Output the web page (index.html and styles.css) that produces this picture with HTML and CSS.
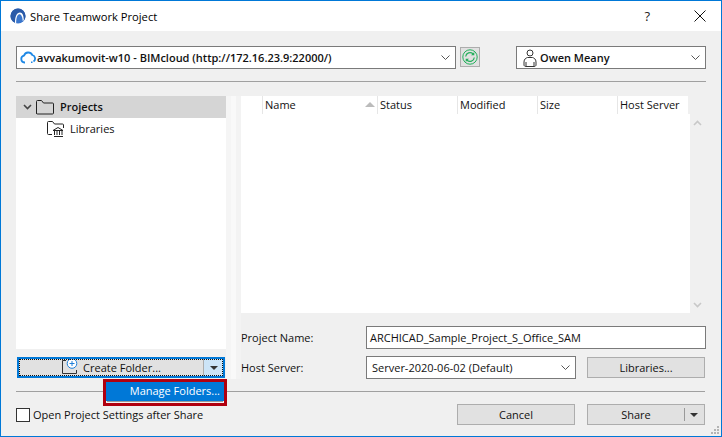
FILE: index.html
```html
<!DOCTYPE html>
<html lang="en">
<head>
<meta charset="utf-8">
<title>Share Teamwork Project</title>
<link rel="stylesheet" href="styles.css">
</head>
<body>
<div class="window">
  <header class="titlebar">
    <svg class="app-logo" width="16" height="16" viewBox="0 0 16 16"><circle cx="8" cy="8" r="7.500" fill="#3a76cc"/><path d="M8 .5a7.500 7.500 0 0 1 7.500 7.500c0 2-.8 3.800-2 5.200C13 9 11.500 6 9 6S5 9.500 4.800 14.800C2.300 13.500.5 11 .5 8A7.500 7.500 0 0 1 8 .5z" fill="#2a5aa8"/><path d="M5 15C5 8.500 6.800 4.500 10 4.500c2.500 0 3.700 3 3.800 7.500l-1 1.200C12.500 9 11.300 6.300 9.300 6.300 7.300 6.300 6.200 10 6.200 15.300z" fill="#fff"/></svg>
    <span class="title">Share Teamwork Project</span>
    <span class="help">?</span>
    <svg class="close" width="12" height="12" viewBox="0 0 12 12"><path d="M.5.5l11 11M11.500.5l-11 11" stroke="#111" stroke-width="1" fill="none"/></svg>
  </header>
  <main class="content">
    <div class="toprow">
      <div class="combo combo-server">
        <svg class="ico" width="16" height="13" viewBox="0 0 16 13"><path d="M5 11.500H4.500a3.500 3.500 0 0 1-.5-6.900A4.500 4.500 0 0 1 12.300 4a3.700 3.700 0 0 1 1.200 6.600" fill="none" stroke="#1e88e5" stroke-width="1.800"/><path d="M11 10.500h1.500v1.500H11z" fill="#1e88e5"/></svg>
        <b class="combo-text">avvakumovit-w10 - BIMcloud (http://172.16.23.9:22000/)</b>
        <svg class="chev" width="9" height="5" viewBox="0 0 9 5"><path d="M.5.5l4 4 4-4" fill="none" stroke="#555"/></svg>
      </div>
      <div class="refresh">
        <svg width="16" height="16" viewBox="0 0 16 16" fill="none" stroke="#23b05c"><circle cx="8" cy="8" r="7.200"/><path d="M3.700 7.500a4.300 4.300 0 0 1 7.300-2.700M12.300 8.500a4.300 4.300 0 0 1-7.300 2.700" stroke-width="1.200"/><path d="M9 6.300h3.300V3zM7 9.700H3.700V13z" fill="#23b05c" stroke="none"/></svg>
      </div>
      <div class="combo combo-user">
        <svg class="ico-user" width="14" height="18" viewBox="0 0 14 18" fill="none" stroke="#333"><circle cx="7" cy="4" r="3"/><path d="M3 17.500h8c1 0 2-.5 2-1.500v-3c0-3-2-4-3.500-4.500h-5C3 9 1 10 1 13v3c0 1 1 1.500 2 1.500zM3 13v4.500M11 13v4.500"/></svg>
        <b class="combo-text">Owen Meany</b>
        <svg class="chev" width="9" height="5" viewBox="0 0 9 5"><path d="M.5.5l4 4 4-4" fill="none" stroke="#555"/></svg>
      </div>
    </div>
    <hr class="sep sep-top">
    <div class="columns">
      <section class="left">
        <div class="tree">
          <div class="tree-row selected">
            <svg class="twist" width="9" height="6" viewBox="0 0 9 6"><path d="M1 1l3.500 3.500L8 1" fill="none" stroke="#444" stroke-width="1.600"/></svg>
            <svg width="18" height="15" viewBox="0 0 18 15"><path d="M.5 13.500V1.500a1 1 0 0 1 1-1h4l2 2.500h9a1 1 0 0 1 1 1v9a1 1 0 0 1-1 1h-15a1 1 0 0 1-1-1z" fill="none" stroke="#222"/></svg>
            <b>Projects</b>
          </div>
          <div class="tree-row sub">
            <svg width="18" height="16" viewBox="0 0 18 16" fill="none" stroke="#222"><path d="M5 13.500H1.500a1 1 0 0 1-1-1v-11a1 1 0 0 1 1-1h4l2 2.500h8a1 1 0 0 1 1 1v3"/><path d="M6 9.500h10l-5-3zM7 15.500h9M7.500 10v4M10 10v4M12.500 10v4M15 10v4"/></svg>
            <span>Libraries</span>
          </div>
        </div>
        <div class="split split-focus">
          <div class="split-main">
            <svg class="ico-new" width="16" height="16" viewBox="0 0 16 16" fill="none"><path d="M.5 2.500v13h14V12M.5 2.500H4" stroke="#333"/><circle cx="10" cy="5.500" r="4.800" fill="#fff" stroke="#1e7fd8"/><path d="M10 3v5M7.500 5.500h5" stroke="#1e7fd8"/></svg>
            <span>Create Folder...</span>
          </div>
          <div class="split-arrow"><i class="tri"></i></div>
        </div>
        <div class="menu"><div class="menu-item">Manage Folders...</div></div>
      </section>
      <div class="splitter"></div>
      <section class="right">
        <div class="table-wrap">
          <div class="table">
            <div class="thead">
              <div class="th th-blank"></div>
              <div class="th th-name"><span>Name</span><i class="sort"></i></div>
              <div class="th th-status">Status</div>
              <div class="th th-mod">Modified</div>
              <div class="th th-size">Size</div>
              <div class="th th-host">Host Server</div>
            </div>
          </div>
          <div class="scrollbar">
            <svg width="9" height="6" viewBox="0 0 9 6"><path d="M1 5l3.500-3.500L8 5" fill="none" stroke="#c8c8c8" stroke-width="1.600"/></svg>
            <svg width="9" height="6" viewBox="0 0 9 6"><path d="M1 1l3.500 3.500L8 1" fill="none" stroke="#c8c8c8" stroke-width="1.600"/></svg>
          </div>
        </div>
        <div class="form-row row-name">
          <label class="label">Project Name:</label>
          <div class="input">ARCHICAD_Sample_Project_S_Office_SAM</div>
        </div>
        <div class="form-row row-host">
          <label class="label">Host Server:</label>
          <div class="combo combo-host">
            <span class="combo-text">Server-2020-06-02 (Default)</span>
            <svg class="chev" width="9" height="5" viewBox="0 0 9 5"><path d="M.5.5l4 4 4-4" fill="none" stroke="#555"/></svg>
          </div>
          <div class="btn btn-lib">Libraries...</div>
        </div>
      </section>
    </div>
    <hr class="sep sep-bottom">
    <div class="footer">
      <div class="check"><i class="box"></i><span>Open Project Settings after Share</span></div>
      <div class="btn btn-cancel">Cancel</div>
      <div class="split split-share">
        <div class="split-main">Share</div>
        <div class="split-arrow"><i class="tri"></i></div>
      </div>
    </div>
  </main>
  <svg class="grip" width="10" height="10" viewBox="0 0 10 10" fill="#b4b4b4"><path d="M7 1h2v2H7zM4 4h2v2H4zM7 4h2v2H7zM1 7h2v2H1zM4 7h2v2H4zM7 7h2v2H7z"/></svg>
</div>
</body>
</html>
```

FILE: styles.css
```css
* { box-sizing: border-box; }
html, body { margin: 0; padding: 0; }
body {
  width: 722px;
  height: 437px;
  overflow: hidden;
  font-family: "Open Sans", "Noto Sans", "Liberation Sans", sans-serif;
  font-size: 11px;
  color: #111;
}
b { font-weight: 600; }
.window {
  position: relative;
  width: 722px;
  height: 437px;
  border: 1px solid #0078d7;
  background: #f0f0f0;
  display: flex;
  flex-direction: column;
}
.titlebar {
  height: 30px;
  background: #fff;
  display: flex;
  align-items: center;
  padding-left: 9px;
  flex: none;
}
.app-logo { flex: none; }
.title {
  margin-left: 4px;
  font-size: 11.2px;
  color: #000;
}
.help { margin-left: auto; margin-right: 44px; font-size: 13px; color: #222; }
.close { margin-right: 15px; }
.content { padding: 15px 15px 0; flex: 1; display: flex; flex-direction: column; }
.toprow { display: flex; align-items: flex-start; height: 23px; }
.combo {
  height: 23px;
  background: #fff;
  border: 1px solid #7a7a7a;
  display: flex;
  align-items: center;
}
.combo-text { white-space: nowrap; }
.chev { margin-left: auto; margin-right: 5px; flex: none; }
.combo-server { width: 440px; padding-left: 3px; }
.combo-server .combo-text { margin-left: 1px; }
.refresh {
  width: 20px;
  height: 20px;
  margin: 1px 0 0 4px;
  background: #e1e1e1;
  border: 1px solid #adadad;
  display: flex;
  align-items: center;
  justify-content: center;
}
.combo-user { width: 190px; margin-left: 36px; padding-left: 6px; }
.combo-user .combo-text { margin-left: 3px; }
.sep { border: 0; height: 1px; background: #a0a0a0; margin: 0; flex: none; }
.sep-top { margin-top: 12px; }
.sep-bottom { margin-top: 12px; margin-right: 1px; }
.columns { display: flex; margin-top: 14px; height: 283px; flex: none; }
.left { position: relative; width: 210px; flex: none; }
.splitter {
  width: 15px;
  flex: none;
  background: linear-gradient(to right, #f5f5f5 5px, #f9f9f9 5px, #f9f9f9 10px, #f3f3f3 10px);
}
.tree { height: 253px; background: #fff; }
.tree-row { height: 22px; display: flex; align-items: center; }
.selected { background: #d5d5d5; padding-left: 7px; }
.selected svg { margin-right: 4px; }
.selected b { margin: 0 0 2px 2px; }
.twist { margin-right: 4px; }
.sub { padding-left: 31px; }
.sub span { margin: 0 0 2px 5px; }
.split {
  height: 21px;
  display: flex;
  background: #e1e1e1;
  border: 1px solid #adadad;
}
.split-focus {
  width: 208px;
  margin: 8px 0 0 1px;
  border: 2px solid #0078d7;
  outline: 1px dotted #111;
  outline-offset: -3px;
}
.split-main {
  flex: 1;
  display: flex;
  align-items: center;
  justify-content: center;
}
.split-focus .split-main { padding-left: 1px; }
.ico-new { margin: -3px 5px 0 0; }
.split-arrow {
  flex: none;
  display: flex;
  align-items: center;
  justify-content: center;
  width: 20px;
}
.split-focus .split-arrow { background: #cce4f7; border-left: 1px solid #adadad; width: 20px; }
.tri {
  width: 0;
  height: 0;
  border-left: 4px solid transparent;
  border-right: 4px solid transparent;
  border-top: 4px solid #333;
}
.menu {
  position: absolute;
  left: 87px;
  top: 283px;
  width: 124px;
  height: 27px;
  border: 3px solid #b0000f;
  background: #f4f4f4;
}
.menu-item {
  height: 19px;
  background: #0078d7;
  color: #fff;
  line-height: 17px;
  text-align: right;
  padding-right: 4px;
  box-shadow: 0 2px 0 -1px #9a9a9a;
}
.right { width: 465px; flex: none; }
.table-wrap { height: 217px; display: flex; }
.table { width: 449px; background: #fff; }
.thead { height: 18px; display: flex; background: #f0f0f0; }
.th {
  background: #fff;
  border-left: 1px solid #e6e6e6;
  padding-left: 2px;
  line-height: 17px;
  white-space: nowrap;
}
.th-blank { width: 21px; border-left: 0; }
.th-name { width: 115px; display: flex; justify-content: space-between; padding-right: 2px; }
.th-status { width: 80px; }
.th-mod { width: 80px; }
.th-size { width: 80px; }
.th-host { flex: 0 0 71px; }
.sort {
  width: 0;
  height: 0;
  margin-top: 6px;
  border-left: 5px solid transparent;
  border-right: 5px solid transparent;
  border-bottom: 5px solid #bbb;
}
.scrollbar {
  width: 16px;
  padding: 24px 0 5px 3px;
  display: flex;
  flex-direction: column;
  justify-content: space-between;
}
.form-row { display: flex; align-items: center; height: 23px; }
.row-name { margin-top: 13px; }
.row-host { margin-top: 7px; }
.label { width: 125px; flex: none; }
.input {
  flex: 1;
  height: 23px;
  background: #fff;
  border: 1px solid #7a7a7a;
  padding-left: 3px;
  line-height: 21px;
}
.combo-host { width: 210px; padding-left: 5px; }
.btn {
  height: 21px;
  background: #e1e1e1;
  border: 1px solid #adadad;
  display: flex;
  align-items: center;
  justify-content: center;
}
.btn-lib { width: 118px; margin-left: 11px; }
.footer { display: flex; align-items: center; margin-top: 12px; height: 21px; padding-right: 1px; }
.check { display: flex; align-items: center; flex: 1; }
.box {
  width: 14px;
  height: 14px;
  background: #fff;
  border: 1px solid #333;
  margin-right: 3px;
}
.btn-cancel { width: 118px; margin-right: 12px; }
.split-share { width: 118px; }
.split-share .split-arrow { position: relative; }
.split-share .split-arrow::before {
  content: "";
  position: absolute;
  left: 0;
  top: 3px;
  bottom: 3px;
  width: 1px;
  background: #999;
}
.grip { position: absolute; right: 1px; bottom: 1px; }
```
